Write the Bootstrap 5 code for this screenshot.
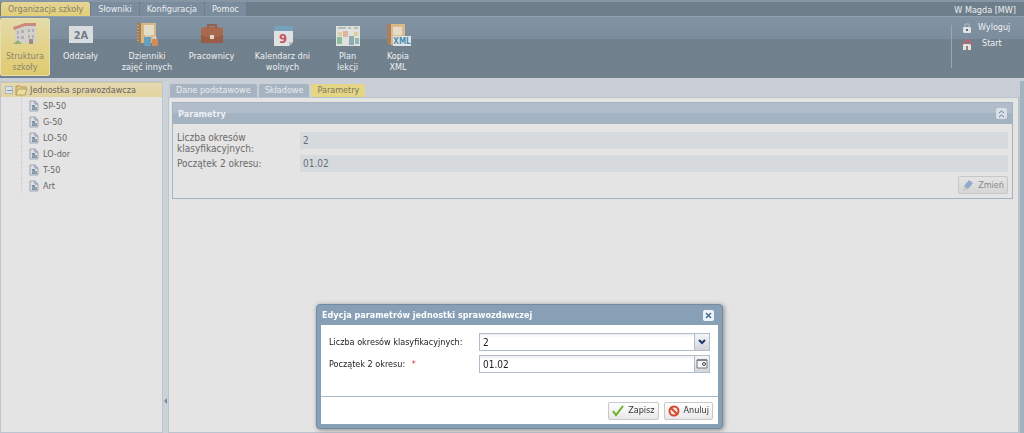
<!DOCTYPE html>
<html lang="pl">
<head>
<meta charset="utf-8">
<meta name="viewport" content="width=device-width, initial-scale=1">
<title>Organizacja szkoły</title>
<link href="https://cdn.jsdelivr.net/npm/bootstrap@5.3.0/dist/css/bootstrap.min.css" rel="stylesheet">
<style>
  body { font: 9px/11px "DejaVu Sans Condensed", "DejaVu Sans", sans-serif; background: #e4e4e4; color: #666; overflow: hidden; }
  button { font: inherit; color: inherit; border: 0; background: none; padding: 0; }
  a { color: inherit; text-decoration: none; }
  svg { display: block; flex: none; }
  .top-tabs { height: 16px; background: #6f7e8b; border-top: 2px solid #8796a5; color: #eceff1; gap: 1px; padding-left: 1px; }
  .top-tabs a { height: 14px; padding: 2px 7px 0; background: #7b8c9c; border-radius: 2px 2px 0 0; }
  .top-tabs a.active { background: linear-gradient(#e5d596, #e2cf77); color: #85816d; }
  .ribbon { height: 62px; background: linear-gradient(#8293a4 0, #7b8c9c 22px, #71818e 22px, #71808d 100%); border-top: 1px solid #91a1b0; color: #eef0f2; }
  .tool { height: 58px; margin-top: 1px; padding-top: 4px; border-radius: 2px; display: flex; flex-direction: column; align-items: center; gap: 4px; }
  .tool.active { background: linear-gradient(#e4dbaa, #e3d28a 50%, #e0cb70); color: #8b866d; border: 1px solid #e7dfac; padding-top: 3px; }
  .user-links { border-left: 1px solid #9aa7b2; width: 73px; height: 43px; margin-top: 8px; padding-left: 9px; gap: 4px; }
  .user-links a { height: 12px; margin-top: -3px; margin-bottom: 3px; gap: 5px; }
  .work { background: #c9ced7; padding-top: 3px; }
  .tree { width: 163px; background: #e4e4e4; border: 1px solid #bcc6d0; }
  .tree ul { margin: 0 0 0 20px; }
  .tree li { height: 16px; border-left: 1px dotted #cbcbcb; padding-left: 7px; gap: 4px; }
  .tree-root { height: 15px; margin-bottom: 1px; padding-left: 4px; gap: 2px; background: linear-gradient(#e5d9b3, #e2d39b); border-top: 1px solid #d2c8a5; }
  .expander { width: 8px; height: 8px; border: 1px solid #a9b6c4; background: #dce1e6; line-height: 5px; color: #6d7d8d; }
  .splitter { width: 5px; background: #cbd2d8; }
  .page-tabs { gap: 2px; padding: 3px 0 0 2px; }
  .page-tabs button { height: 13px; padding: 0 6px; color: #e9ecef; background: #a6b4c2; border-radius: 2px 2px 0 0; }
  .page-tabs .active { color: #7b7660; background: #e5d685; }
  .page-body { background: #e4e4e4; border: 1px solid #b9c4cf; border-right-width: 2px; padding: 4px 5px 0 3px; }
  .edge { width: 4px; background: #a3b2bf; }
  .param-panel { border: 1px solid #a6b3bf; }
  .param-title { height: 21px; padding: 0 5px; color: #edf0f3; background: linear-gradient(#b1bdca 45%, #a4b3c1 50%); font: bold 9px/20px "DejaVu Sans Condensed", "DejaVu Sans", sans-serif; }
  .param-grid { display: grid; grid-template-columns: 123px 1fr; row-gap: 6px; padding: 8px 4px 4px; font-size: 10px; }
  .param-grid label { color: #6a6a6a; height: 17px; }
  .param-grid label + input + label { padding-top: 3px; }
  .param-grid input { height: 17px; width: 100%; border: 0; padding: 0 3px; background: #d7dadd; color: #667079; font-size: 10px; }
  .tool-btn { height: 18px; border: 1px solid #c8c8c8; border-radius: 2px; background: linear-gradient(#fff, #e8e8e8); padding: 0 3px; gap: 4px; color: #333; }
  .dim-btn { background: linear-gradient(#e4e4e4, #d6d6d6); color: #888; border-color: #c7c7c7; }
  .window { left: 316px; bottom: 4px; width: 407px; background: #87a0b6; border: 1px solid #718ba2; border-radius: 4px; padding: 0 4px 4px; box-shadow: 1px 1px 5px #888; color: #222; }
  .window-title { height: 20px; color: #fff; padding: 0 4px 0 1px; }
  .window-title h1 { font: bold 9px/20px "DejaVu Sans Condensed", "DejaVu Sans", sans-serif; margin: 0; }
  .window-body { background: #fff; padding: 8px 8px 23px; display: grid; grid-template-columns: 150px 1fr; row-gap: 4px; align-items: center; }
  .window-body select, .window-body input { border: 1px solid #b3bccb; border-radius: 0; background: linear-gradient(#f0f0f0, #fff 4px); height: 18px; padding: 0 3px; font-size: 10px; color: #222; min-width: 0; appearance: none; flex: 1; }
  .trigger { width: 15px; height: 18px; border: 1px solid #b3bccb; border-left: 0; background: linear-gradient(#f4f5f6, #d2d7dd); }
  .window-foot { height: 28px; border-top: 1px solid #a8bac9; background: #fff; padding: 0 5px; gap: 5px; }
</style>
</head>
<body class="vh-100 d-flex flex-column">
<header>
  <nav class="top-tabs d-flex">
    <a class="active" href="#">Organizacja szkoły</a><a href="#">Słowniki</a><a href="#">Konfiguracja</a><a href="#">Pomoc</a>
    <span class="ms-auto pe-2 pt-1 lh-1">W Magda [MW]</span>
  </nav>
  <div class="ribbon d-flex">
    <button class="tool active" style="width:50px"><svg width="26" height="25" viewBox="0 0 26 25"><path d="M3 7 14 4v17H3zM14 3l10 1v17H14z" fill="#d3cfc9"/><path d="m1 5 12-4v3L2 8zM13 1h11v3H13z" fill="#c98b80"/><path d="M5 9h2v3H5zm4-1h3v3H9zm7-1h2v3h-2zm4 0h2v3h-2zM5 14h2v3H5zm4 0h3v3H9zm7-1h2v3h-2zm4 0h2v3h-2z" fill="#aab1b8"/><path d="M17 17h4v5h-4z" fill="#9f8b83"/><path d="m1 22 5-4 4 4z" fill="#93b26f"/></svg><span>Struktura<br>szkoły</span></button>
    <button class="tool" style="width:61px"><svg width="26" height="25" viewBox="0 0 26 25"><path d="M1 4h24v17H1z" fill="#d9dcde"/><text x="13" y="17" font-size="11" font-weight="bold" text-anchor="middle" fill="#737b82">2A</text></svg>Oddziały</button>
    <button class="tool" style="width:72px"><svg width="26" height="25" viewBox="0 0 26 25"><path d="M3 1h4v21H5l-2-3z" fill="#a57c56"/><path d="M7 1h15v20H7z" fill="#d9b781"/><path d="M10 3h10v10H10z" fill="#e3dcc7"/><path d="M4 3v16" stroke="#c7c9c9" stroke-dasharray="1 2"/><path d="M10 15h7v9h-7z" fill="#699fbe"/><path d="M18 17h6v7h-6z" fill="#d4895b"/><path d="M12 15v-2h4v2M19 17v-2h3v2" stroke="#d9dfe1" fill="none"/></svg><span>Dzienniki<br>zajęć innych</span></button>
    <button class="tool" style="width:57px"><svg width="26" height="25" viewBox="0 0 26 25"><path d="M2 6q11-3 22 0v15H2z" fill="#a8694e"/><path d="M9 6V3h8v3" fill="none" stroke="#8e6351" stroke-width="2"/><path d="M2 13q11 5 22 0v8H2z" fill="#995d45"/><path d="M11 13h4v4h-4z" fill="#e2d7cb"/></svg>Pracownicy</button>
    <button class="tool" style="width:85px"><svg width="26" height="25" viewBox="0 0 26 25"><path d="M4 4h19v16l-4 4H4z" fill="#e0e1e2"/><path d="M4 4h19v5H4z" fill="#75a3bd"/><path d="M19 24v-4h4z" fill="#b6c0c8"/><text x="13" y="21" font-size="13" font-weight="bold" text-anchor="middle" fill="#c45557">9</text></svg><span>Kalendarz dni<br>wolnych</span></button>
    <button class="tool" style="width:45px"><svg width="26" height="25" viewBox="0 0 26 25"><path d="M1 4h24v20H1z" fill="#dfe1dd"/><path d="M3 6h8m2 0h3m3 0h4" stroke="#8e9798"/><path d="M3 10h4v4H3zm16 0h4v4h-4z" fill="#d8cf9d"/><path d="M2 15h5v7H2z" fill="#91b9a0"/><path d="M8 9h5v6H8z" fill="#dfb49f"/><path d="M14 14h5v9h-5z" fill="#91a8b5"/><path d="M20 16h4v6h-4z" fill="#94b8ae"/></svg><span>Plan<br>lekcji</span></button>
    <button class="tool" style="width:56px"><svg width="26" height="25" viewBox="0 0 26 25"><path d="M2 2h4v21H4l-2-3z" fill="#a88060"/><path d="M6 2h14v21H6z" fill="#d9ba88"/><path d="M8 5h9v8H8z" fill="#e6ddc8"/><path d="M8 14h18v10H8z" fill="#dde4e7"/><text x="17" y="22" font-size="8" font-weight="bold" text-anchor="middle" fill="#4f8cac">XML</text></svg><span>Kopia<br>XML</span></button>
    <div class="user-links ms-auto d-flex flex-column">
      <a href="#" class="d-flex"><svg width="12" height="12" viewBox="0 0 12 12"><path d="M4 6V2h4v4" fill="none" stroke="#b7bec4"/><rect x="2" y="5" width="8" height="6" rx="1" fill="#dfe2e4"/><path d="M5 7h2v2H5z" fill="#606d78"/></svg>Wyloguj</a>
      <a href="#" class="d-flex"><svg width="12" height="12" viewBox="0 0 12 12"><path d="M2 6h8v6H2z" fill="#e5e3e1"/><path d="M1 7 6 2l5 5M9 1v3" fill="none" stroke="#bf6767" stroke-width="1.500"/><path d="M5 8h2v4H5z" fill="#8b8582"/></svg><span class="ps-1">Start</span></a>
    </div>
  </div>
</header>
<div class="work d-flex flex-fill">
  <aside class="tree">
    <div class="tree-root d-flex align-items-center"><button class="expander" aria-label="Zwiń">−</button><svg width="13" height="12" viewBox="0 0 13 12"><path d="M1 11V2h4l1 1h5v2" fill="#e1ca83" stroke="#b19c5c"/><path d="m1 11 2-6h9l-2 6z" fill="#ecdda0" stroke="#b5a161"/></svg><a href="#">Jednostka sprawozdawcza</a></div>
    <svg width="0" height="0" class="position-absolute"><symbol id="doc" viewBox="0 0 10 12"><path d="M1 1h5l3 3v7H1z" fill="#d9dee4" stroke="#9aa6b2"/><path d="M6 1v3h3" fill="none" stroke="#8494a5"/><path d="M3 5h3v2h2v3H3z" fill="#7f90a2"/><path d="M3 8h5" stroke="#aab6c2"/></symbol></svg>
    <ul class="list-unstyled">
      <li class="d-flex align-items-center"><svg width="10" height="12"><use href="#doc"/></svg><a href="#">SP-50</a></li>
      <li class="d-flex align-items-center"><svg width="10" height="12"><use href="#doc"/></svg><a href="#">G-50</a></li>
      <li class="d-flex align-items-center"><svg width="10" height="12"><use href="#doc"/></svg><a href="#">LO-50</a></li>
      <li class="d-flex align-items-center"><svg width="10" height="12"><use href="#doc"/></svg><a href="#">LO-dor</a></li>
      <li class="d-flex align-items-center"><svg width="10" height="12"><use href="#doc"/></svg><a href="#">T-50</a></li>
      <li class="d-flex align-items-center"><svg width="10" height="12"><use href="#doc"/></svg><a href="#">Art</a></li>
    </ul>
  </aside>
  <div class="splitter d-flex align-items-end pb-4"><svg width="5" height="16" viewBox="0 0 5 16"><path d="M4 5v6L1 8z" fill="#7d8a96"/></svg></div>
  <main class="flex-fill d-flex flex-column">
    <div class="page-tabs d-flex"><button>Dane podstawowe</button><button>Składowe</button><button class="active">Parametry</button></div>
    <div class="page-body flex-fill">
      <section class="param-panel">
        <div class="param-title d-flex align-items-center justify-content-between">Parametry
          <button aria-label="Zwiń panel"><svg width="11" height="11" viewBox="0 0 11 11"><rect width="11" height="11" rx="2" fill="#d8dfe6"/><path d="m3 5 2.500-2L8 5M3 9l2.500-2L8 9" fill="none" stroke="#6e8194"/></svg></button></div>
        <div class="param-grid">
          <label for="p1">Liczba okresów<br>klasyfikacyjnych:</label><input id="p1" value="2" readonly>
          <label for="p2">Początek 2 okresu:</label><input id="p2" value="01.02" readonly>
        </div>
        <div class="d-flex justify-content-end px-1 pb-1"><button class="tool-btn dim-btn d-flex align-items-center"><svg width="12" height="12" viewBox="0 0 12 12"><path d="m2 7 5-6 4 3-5 6-4 1z" fill="#8eacc9"/><path d="m2 7 4 3-5 2z" fill="#d3cbbd"/></svg>Zmień</button></div>
      </section>
    </div>
  </main>
  <div class="edge"></div>
</div>
<form class="window position-fixed" role="dialog" aria-labelledby="dlg">
  <div class="window-title d-flex align-items-center justify-content-between"><h1 id="dlg">Edycja parametrów jednostki sprawozdawczej</h1>
    <button type="button" aria-label="Zamknij"><svg width="11" height="11" viewBox="0 0 11 11"><rect width="11" height="11" rx="2" fill="#eef4fa"/><path d="m3 3 5 5m0-5L3 8" stroke="#476b94" stroke-width="1.500"/></svg></button></div>
  <div class="window-body">
    <label for="f1">Liczba okresów klasyfikacyjnych:</label>
    <div class="d-flex"><select id="f1"><option>2</option></select><button type="button" class="trigger" aria-label="Rozwiń"><svg class="mx-auto" width="10" height="10" viewBox="0 0 10 10"><path d="m2 3 3 3 3-3" fill="none" stroke="#1f3869" stroke-width="2"/></svg></button></div>
    <label for="f2">Początek 2 okresu: <span class="text-danger ms-1">*</span></label>
    <div class="d-flex"><input id="f2" value="01.02"><button type="button" class="trigger" aria-label="Kalendarz"><svg class="mx-auto" width="12" height="12" viewBox="0 0 12 12"><path d="M1 2h10v8H1z" fill="#f7f7f7" stroke="#777"/><path d="M1 2h10" stroke="#445a78" stroke-width="1"/><circle cx="8" cy="6" r="1.500" fill="none" stroke="#444"/></svg></button></div>
  </div>
  <div class="window-foot d-flex align-items-center justify-content-end">
    <button type="button" class="tool-btn d-flex align-items-center"><svg width="12" height="12" viewBox="0 0 12 12"><path d="m1 6 3 4 7-9" fill="none" stroke="#6eb02c" stroke-width="2"/></svg>Zapisz</button>
    <button type="button" class="tool-btn d-flex align-items-center"><svg width="12" height="12" viewBox="0 0 12 12"><circle cx="6" cy="6" r="4.500" fill="#fae9e2" stroke="#d2492d" stroke-width="2"/><path d="m3 3 6 6" stroke="#d2492d" stroke-width="2"/></svg>Anuluj</button>
  </div>
</form>
<script src="https://cdn.jsdelivr.net/npm/bootstrap@5.3.0/dist/js/bootstrap.bundle.min.js"></script>
</body>
</html>
